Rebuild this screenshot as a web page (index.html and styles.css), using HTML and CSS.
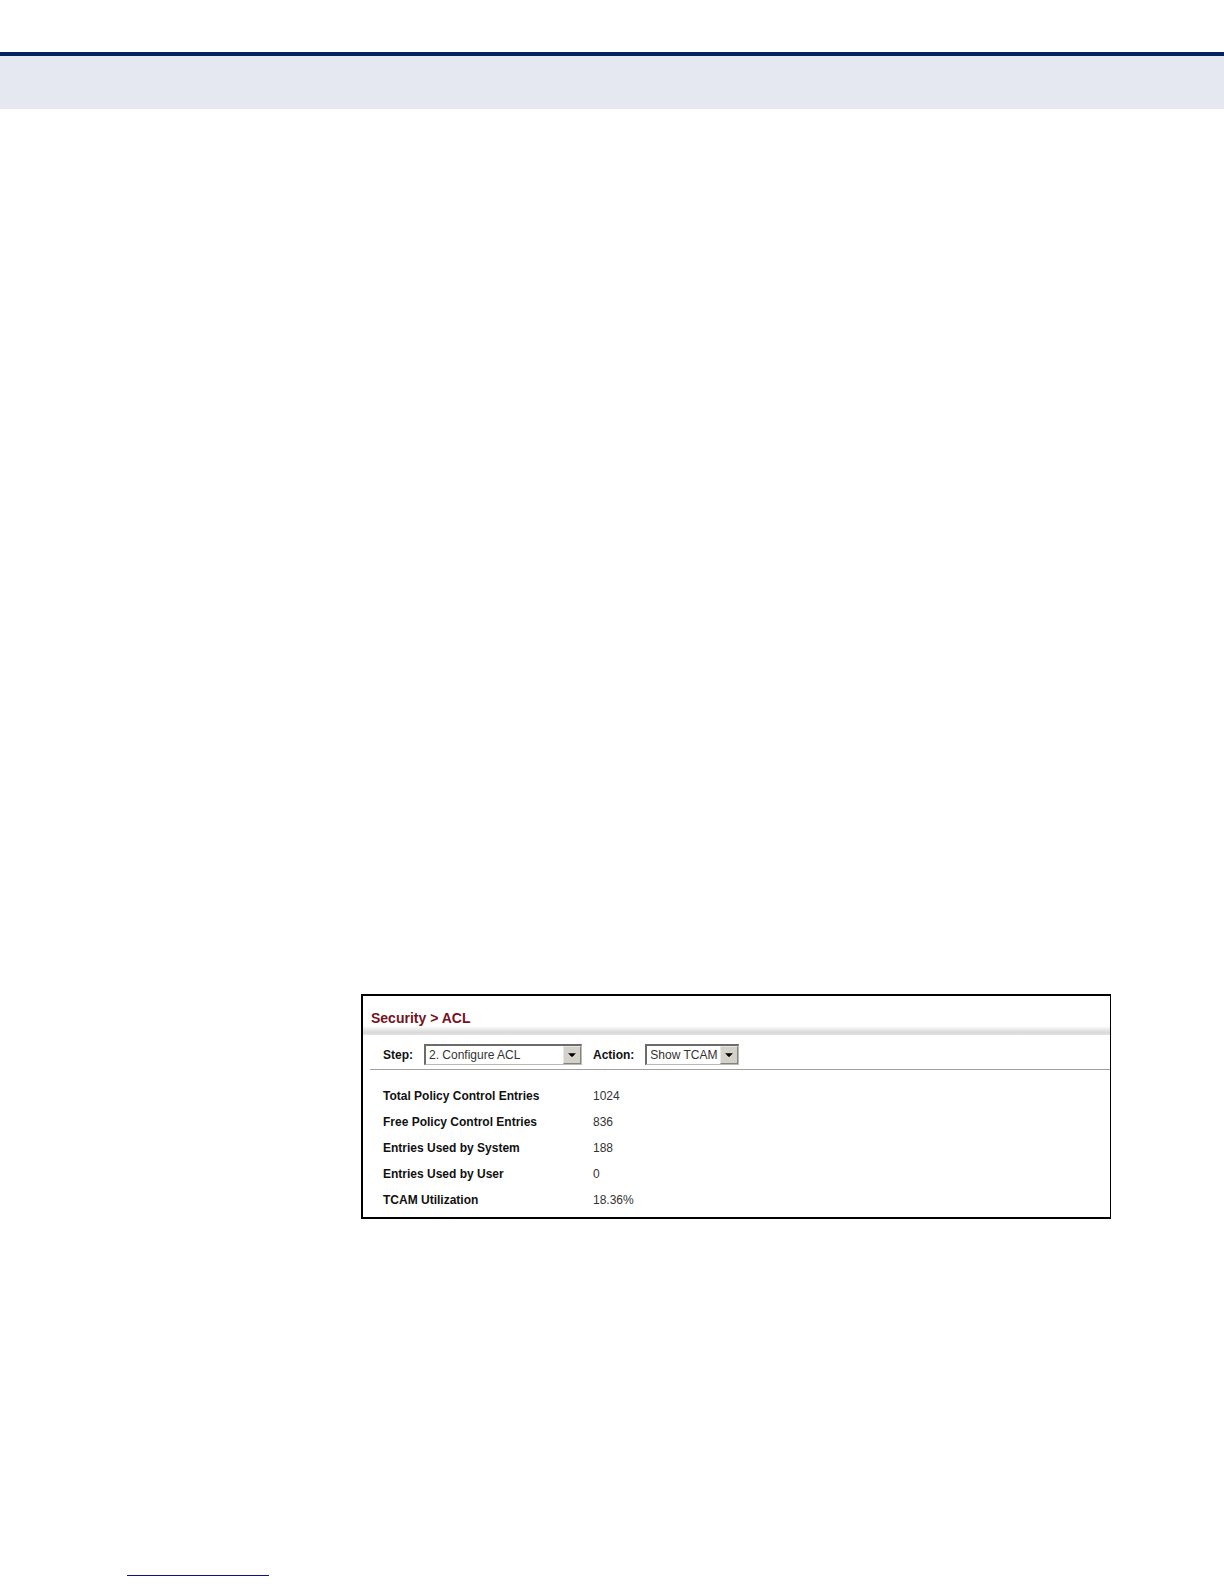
FILE: index.html
```
<!DOCTYPE html>
<html lang="en">
<head>
  <meta charset="UTF-8">
  <meta name="viewport" content="width=device-width, initial-scale=1">
  <title>Security &gt; ACL</title>
  <link rel="stylesheet" href="styles.css">
</head>
<body>
  <header class="page-header"></header>
  <main class="content">
    <section class="panel">
      <h1>Security &gt; ACL</h1>
      <div class="title-bar"></div>
      <form class="toolbar">
        <label for="step">Step:</label>
        <div class="dropdown step">
          <select id="step" name="step">
            <option>2. Configure ACL</option>
          </select>
          <svg class="arrow" viewBox="0 0 18 18" aria-hidden="true"><path d="M5 7h8v1h-1v1h-1v1h-1v1H8v-1H7V9H6V8H5z"/></svg>
        </div>
        <label for="action">Action:</label>
        <div class="dropdown action">
          <select id="action" name="action">
            <option>Show TCAM</option>
          </select>
          <svg class="arrow" viewBox="0 0 18 18" aria-hidden="true"><path d="M5 7h8v1h-1v1h-1v1h-1v1H8v-1H7V9H6V8H5z"/></svg>
        </div>
      </form>
      <table class="entries">
        <tr><th scope="row">Total Policy Control Entries</th><td>1024</td></tr>
        <tr><th scope="row">Free Policy Control Entries</th><td>836</td></tr>
        <tr><th scope="row">Entries Used by System</th><td>188</td></tr>
        <tr><th scope="row">Entries Used by User</th><td>0</td></tr>
        <tr><th scope="row">TCAM Utilization</th><td>18.36%</td></tr>
      </table>
    </section>
  </main>
  <footer class="page-footer">
    <div class="footer-rule"></div>
  </footer>
</body>
</html>
```
FILE: styles.css
```
* { box-sizing: border-box; }

body, h1, form { margin: 0; padding: 0; }

body {
  min-height: 100vh;
  display: flex;
  flex-direction: column;
  background: #ffffff;
  color: #111111;
  font-family: "Liberation Sans", Arial, sans-serif;
  font-size: 12px;
  line-height: 16px;
}

.page-header {
  height: 57px;
  margin-top: 52px;
  border-top: 4px solid #04225f;
  background: #e5e8f0;
}

/* figure sits low on the page, indented from the left */
.content {
  flex: 1;
  padding: 885px 113px 0 361px;
}

.panel {
  border: 2px solid #000000;
  border-right-width: 1px;
}

h1 {
  padding: 14px 8px 0;
  font-size: 14px;
  line-height: 16px;
  color: #74131c;
}

.title-bar {
  height: 9px;
  background: linear-gradient(#ffffff, #d8d8d8 70%, #e4e4e4);
}

.toolbar {
  display: flex;
  align-items: center;
  gap: 11px;
  height: 35px;
  margin-left: 7px;
  padding: 4px 13px 0;
  border-bottom: 1px solid #a0a0a0;
}

.toolbar label {
  padding-top: 2px;
  font-weight: bold;
}

.dropdown {
  position: relative;
  height: 21px;
}

.step { width: 158px; }

.action { width: 94px; }

.dropdown select {
  appearance: none;
  display: block;
  width: 100%;
  height: 100%;
  padding: 0 20px 0 3px;
  border: 2px solid #6c6c6c;
  border-right: 1px solid #bcbab5;
  border-bottom: 1px solid #bcbab5;
  border-radius: 0;
  background: #ffffff;
  color: #333333;
  font: inherit;
}

.arrow {
  position: absolute;
  top: 2px;
  right: 1px;
  width: 18px;
  height: 18px;
  border: 1px solid;
  border-color: #e8e6e1 #85837e #85837e #e8e6e1;
  background: #d4d1ca;
  pointer-events: none;
}

.entries {
  margin: 13px 0 4px 20px;
  border-collapse: collapse;
}

.entries th, .entries td {
  height: 26px;
  padding: 0;
  text-align: left;
}

.entries th {
  width: 210px;
}

.entries td {
  color: #333333;
}

.page-footer {
  padding: 0 127px 8px;
}

.footer-rule {
  width: 142px;
  border-top: 1px solid #10107a;
}
```
